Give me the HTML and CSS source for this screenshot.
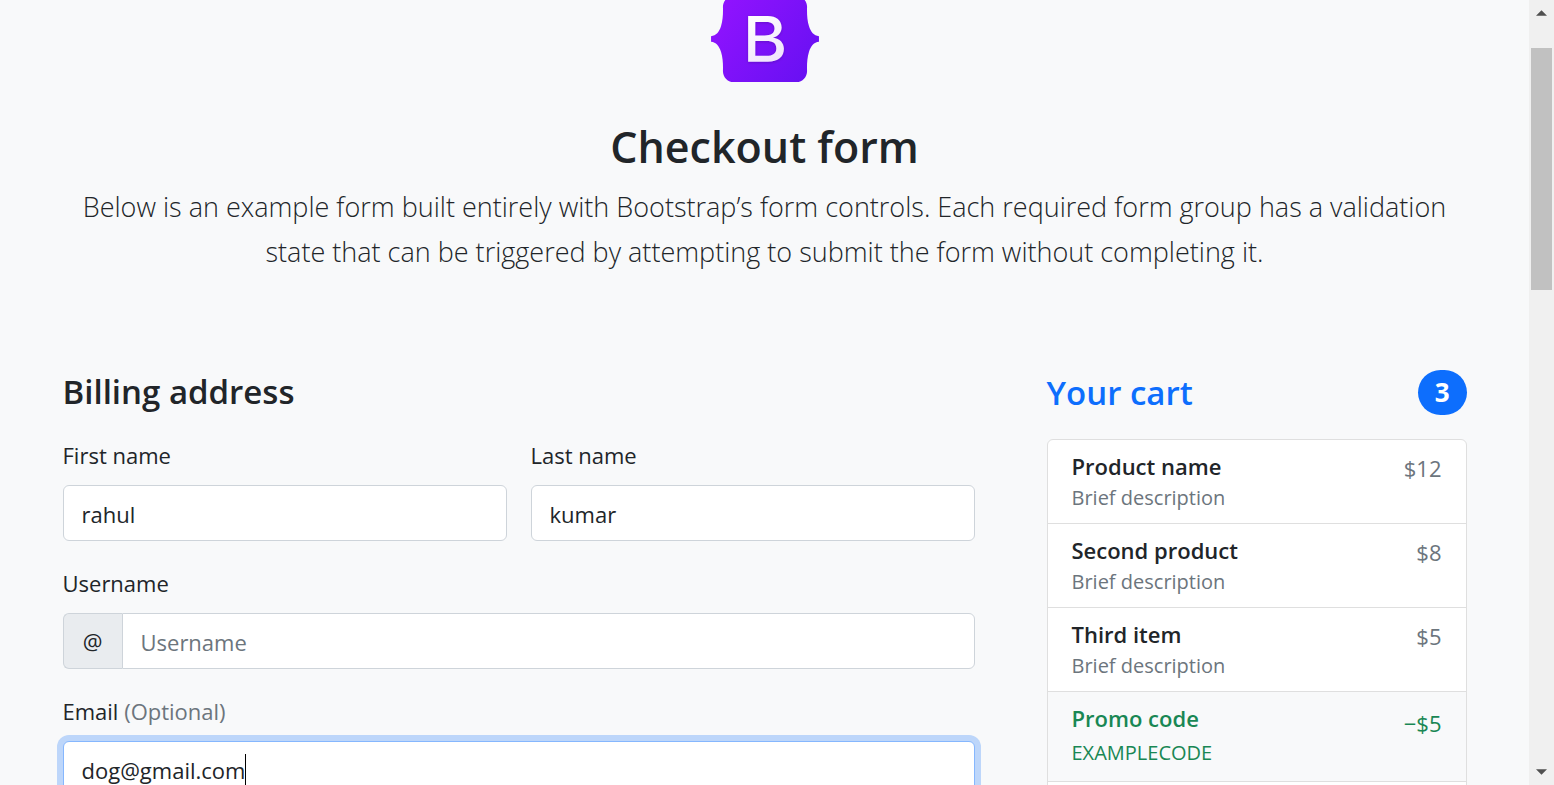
FILE: index.html
```html
<!DOCTYPE html>
<html lang="en">
<head>
<meta charset="utf-8">
<title>Checkout form</title>
<link rel="stylesheet" href="styles.css">
</head>
<body>
<div class="page">
  <div class="container">
    <header class="intro">
      <svg class="logo" viewBox="0 0 512 408" role="img" aria-label="Bootstrap">
        <defs>
          <linearGradient id="shell" x1="76" y1="10" x2="523" y2="365" gradientUnits="userSpaceOnUse"><stop stop-color="#9013fe"/><stop offset="1" stop-color="#6610f2"/></linearGradient>
          <linearGradient id="letter" x1="194" y1="94" x2="307" y2="292" gradientUnits="userSpaceOnUse"><stop stop-color="#fff"/><stop offset="1" stop-color="#f1e5fc"/></linearGradient>
          <filter id="shade" x="-20%" y="-20%" width="140%" height="140%"><feDropShadow dx="0" dy="4" stdDeviation="8" flood-opacity=".2"/></filter>
        </defs>
        <path fill="url(#shell)" d="M106.342 0c-29.214 0-50.827 25.58-49.86 53.32.927 26.647-.278 61.165-8.966 89.31C38.802 170.862 24.07 188.707 0 191v26c24.069 2.293 38.802 20.138 47.516 48.37 8.688 28.145 9.893 62.663 8.965 89.311C55.515 382.42 77.128 408 106.342 408h299.353c29.214 0 50.827-25.58 49.861-53.319-.928-26.648.277-61.166 8.964-89.311 8.715-28.232 23.411-46.077 47.48-48.37v-26c-24.069-2.293-38.764-20.138-47.48-48.37-8.687-28.145-9.892-62.663-8.964-89.31C456.522 25.58 434.909 0 405.695 0H106.342z"/>
        <path fill="url(#letter)" fill-rule="evenodd" filter="url(#shade)" d="M176 312h94c47.3 0 75.800-23.200 75.800-61.400 0-28.800-20.300-49.700-50.500-53v-1.200c22.200-3.600 39.600-24.300 39.600-47.300 0-32.800-25.900-54.100-65.300-54.100H176zm34-189h53c25 0 38 11.300 38 31.300 0 21.500-16.500 32.700-46.400 32.700H210zm0 161v-70h52c32.700 0 47.600 11.500 47.600 35 0 23.500-16.500 35-47.600 35z"/>
      </svg>
      <h1 class="title">Checkout form</h1>
      <p class="lead">Below is an example form built entirely with Bootstrap’s form controls. Each required form group has a validation state that can be triggered by attempting to submit the form without completing it.</p>
    </header>
    <main class="columns">
      <section class="billing">
        <h2 class="subtitle">Billing address</h2>
        <form class="fields">
          <div class="field">
            <label for="first">First name</label>
            <input class="control" id="first" type="text" value="rahul">
          </div>
          <div class="field">
            <label for="last">Last name</label>
            <input class="control" id="last" type="text" value="kumar">
          </div>
          <div class="field wide">
            <label for="user">Username</label>
            <div class="group">
              <span class="addon">@</span>
              <input class="control" id="user" type="text" placeholder="Username">
            </div>
          </div>
          <div class="field wide">
            <label for="email">Email <span class="muted">(Optional)</span></label>
            <div class="control focused">
              <input class="bare" id="email" type="text" value="dog@gmail.com">
              <span class="caret"></span>
            </div>
          </div>
        </form>
      </section>
      <section class="cart">
        <h2 class="subtitle cart-title"><span>Your cart</span><span class="badge">3</span></h2>
        <ul class="items">
          <li class="item"><div><h3 class="name">Product name</h3><small class="note">Brief description</small></div><span class="price">$12</span></li>
          <li class="item"><div><h3 class="name">Second product</h3><small class="note">Brief description</small></div><span class="price">$8</span></li>
          <li class="item"><div><h3 class="name">Third item</h3><small class="note">Brief description</small></div><span class="price">$5</span></li>
          <li class="item promo"><div><h3 class="name">Promo code</h3><small class="note">EXAMPLECODE</small></div><span class="price">−$5</span></li>
          <li class="item"></li>
        </ul>
      </section>
    </main>
  </div>
</div>
<div class="scrollbar" aria-hidden="true">
  <svg class="arrow" viewBox="0 0 12 6"><path fill="#505050" d="M6 0l6 6H0z"/></svg>
  <div class="track"><div class="thumb"></div></div>
  <svg class="arrow" viewBox="0 0 12 6"><path fill="#505050" d="M0 0h12L6 6z"/></svg>
</div>
</body>
</html>
```
FILE: styles.css
```css
*, *::before, *::after { box-sizing: border-box; }
body {
  margin: 0;
  display: flex;
  height: 100vh;
  overflow: hidden;
  background: #f8f9fa;
  color: #212529;
  font: 400 22px/36px "Segoe UI", "Open Sans", "Noto Sans", sans-serif;
}
h1, h2, h3, p, ul { margin: 0; padding: 0; }
.page { flex: 1; min-width: 0; overflow: hidden; }
.container { max-width: 1476px; margin: 0 auto; padding: 0 36px; }
.intro { margin-top: -4px; text-align: center; }
.logo { display: block; width: 108px; height: 86px; margin: 0 auto 36px; }
.title { font-size: 43px; line-height: 58px; font-weight: 600; margin-bottom: 8px; }
.lead { font-size: 27px; line-height: 45px; font-weight: 300; }
.columns { display: grid; grid-template-columns: repeat(12, 1fr); column-gap: 72px; padding-top: 96px; }
.billing { grid-column: span 8; }
.cart { grid-column: span 4; }
.subtitle { font-size: 33px; line-height: 43px; font-weight: 600; }
.fields { display: grid; grid-template-columns: 1fr 1fr; gap: 24px; margin-top: 24px; }
.field { display: grid; gap: 12px; }
.field label { display: block; }
.wide { grid-column: span 2; }
.muted { color: #6c757d; }
.control {
  width: 100%;
  min-width: 0;
  height: 56px;
  padding: 2px 18px 0;
  border: 1px solid #ced4da;
  border-radius: 6px;
  background: #fff;
  color: #212529;
  font: inherit;
  outline: 0;
}
.control::placeholder { color: #6c757d; opacity: 1; }
.group { display: flex; }
.group .control { border-radius: 0 6px 6px 0; }
.addon {
  display: flex;
  flex: none;
  align-items: center;
  justify-content: center;
  width: 59px;
  border: 1px solid #ced4da;
  border-right: 0;
  border-radius: 6px 0 0 6px;
  background: #e9ecef;
}
.focused {
  display: flex;
  align-items: center;
  border-color: #86b7fe;
  box-shadow: 0 0 0 6px rgba(13, 110, 253, .25);
}
.bare {
  field-sizing: content;
  padding: 0;
  border: 0;
  outline: 0;
  background: none;
  color: inherit;
  font: inherit;
}
.caret { width: 1px; height: 33px; background: #000; }
.cart-title { display: flex; justify-content: space-between; align-items: center; color: #0d6efd; line-height: 45px; }
.badge {
  padding: 0 17px;
  border-radius: 24px;
  background: #0d6efd;
  color: #fff;
  font-size: 26px;
  font-weight: 700;
}
.items { margin-top: 24px; list-style: none; border: 1px solid #dfdfdf; border-radius: 6px; background: #fff; overflow: hidden; }
.item { display: flex; justify-content: space-between; padding: 12px 24px; line-height: 32px; }
.item + .item { border-top: 1px solid #dfdfdf; }
.name { font-size: 22px; line-height: 29px; font-weight: 600; }
.note, .price { color: #6c757d; }
.note { display: block; padding-top: 3px; font-size: 20px; line-height: 27px; }
.promo { background: #f8f9fa; line-height: 38px; }
.promo .note { line-height: 33px; }
.promo .name, .promo .note, .promo .price { color: #198754; }
.scrollbar {
  display: flex;
  flex-direction: column;
  align-items: center;
  width: 25px;
  padding: 10px 2px;
  background: #f0f0f0;
}
.arrow { width: 11px; height: 6px; flex: none; }
.track { flex: 1; align-self: stretch; padding-top: 32px; }
.thumb { width: 21px; height: 33.5%; background: #c1c1c1; }
```
